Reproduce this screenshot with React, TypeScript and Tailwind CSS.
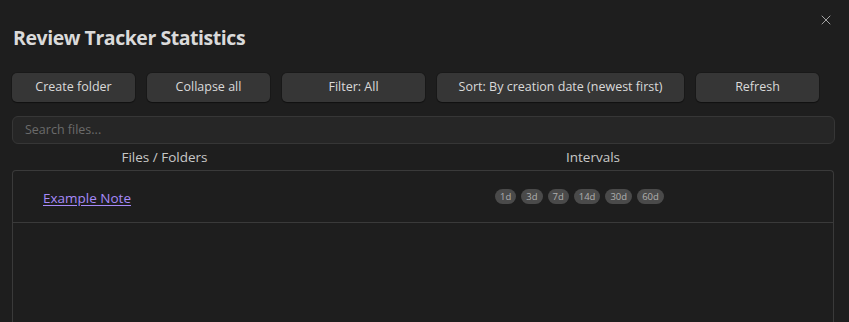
import { X } from 'lucide-react';

const buttons = [
  { label: 'Create folder', w: 'w-[123px]' },
  { label: 'Collapse all', w: 'w-[123px]' },
  { label: 'Filter: All', w: 'w-[143px]' },
  { label: 'Sort: By creation date (newest first)', w: 'w-[247px]' },
  { label: 'Refresh', w: 'w-[123px]' },
];

const intervals = ['1d', '3d', '7d', '14d', '30d', '60d'];

export default function App() {
  return (
    <div
      className="relative h-[322px] w-[849px] overflow-hidden bg-[#1e1e1e] text-[#dadada]"
      style={{ fontFamily: '"Open Sans", "Noto Sans", sans-serif' }}
    >
      {/* Close */}
      <button className="absolute right-[15px] top-[12px] text-[#a3a3a3]">
        <X className="h-[16px] w-[16px]" strokeWidth={1.5} />
      </button>

      <div className="px-3 pt-[24px]">
        <h1 className="pl-px text-[19.5px] font-bold leading-[28px] tracking-[-0.45px] text-[#dadada]">
          Review Tracker Statistics
        </h1>

        {/* Toolbar */}
        <div className="mt-[21px] flex gap-3">
          {buttons.map((b) => (
            <button
              key={b.label}
              className={`${b.w} h-[29px] shrink-0 rounded-[5px] bg-[#363636] text-[12.5px] text-[#dadada] shadow-[0_1px_1px_rgba(0,0,0,0.35),0_0_0_1px_rgba(0,0,0,0.15)]`}
            >
              {b.label}
            </button>
          ))}
        </div>

        {/* Search */}
        <div className="mt-[14px] flex h-[28px] w-[823px] items-center rounded-[6px] border border-[#363636] bg-[#262626] px-3">
          <span className="text-[12.5px] text-[#6b6b6b]">Search files...</span>
        </div>

        {/* Column headers */}
        <div className="flex h-[26px] items-center text-[13.5px] text-[#c8c8c8]">
          <div className="w-[305px] shrink-0 text-center">Files / Folders</div>
          <div className="w-[552px] shrink-0 text-center">Intervals</div>
        </div>

        {/* Table */}
        <div className="h-[160px] w-[822px] rounded-t-[4px] border border-b-0 border-[#3a3a3a]">
          <div className="flex h-[52px] items-center border-b border-[#3a3a3a]">
            <div className="w-[482px] shrink-0 pl-[30px]">
              <a
                href="#"
                className="text-[13.5px] text-[#a68af9] underline underline-offset-2"
              >
                Example Note
              </a>
            </div>
            <div className="flex gap-[5px]">
              {intervals.map((i) => (
                <span
                  key={i}
                  className="flex h-[15px] items-center rounded-full bg-[#4a4a4a] px-[5px] text-[9.5px] leading-none text-[#b0b0b0]"
                >
                  {i}
                </span>
              ))}
            </div>
          </div>
        </div>
      </div>
    </div>
  );
}
